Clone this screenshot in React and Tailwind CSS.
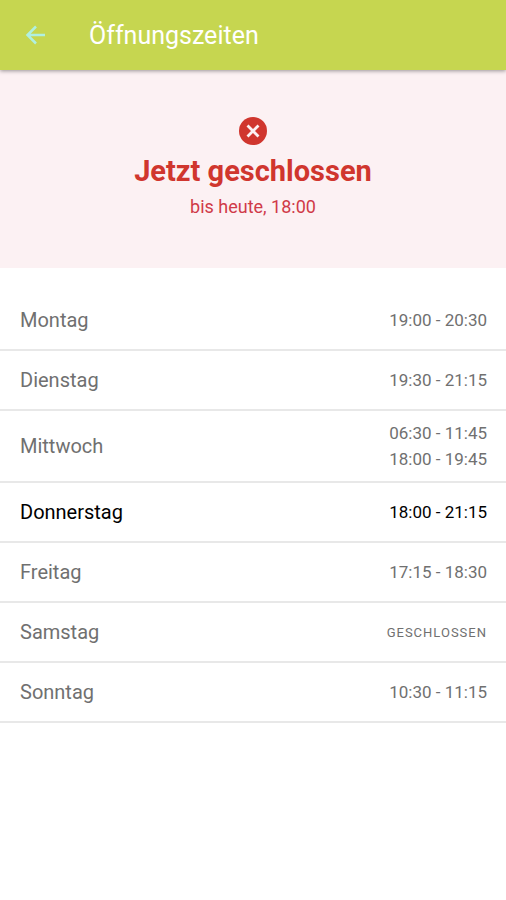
const days = [
  { day: "Montag", times: ["19:00 - 20:30"] },
  { day: "Dienstag", times: ["19:30 - 21:15"] },
  { day: "Mittwoch", times: ["06:30 - 11:45", "18:00 - 19:45"] },
  { day: "Donnerstag", times: ["18:00 - 21:15"], today: true },
  { day: "Freitag", times: ["17:15 - 18:30"] },
  { day: "Samstag", times: [] },
  { day: "Sonntag", times: ["10:30 - 11:15"] },
];

function DayRow({ day, times, today }) {
  return (
    <tr className={`border-b-2 border-[#e8e8e8] ${today ? "text-black" : "text-[#707070]"}`}>
      <th scope="row" className="py-2 pl-5 text-left text-[20px] leading-[26px] font-normal">
        {day}
      </th>
      <td className={`pr-[19px] text-right text-[17px] leading-[26px] ${times.length > 1 ? "h-[72px]" : "h-[60px]"}`}>
        {times.length === 0 ? (
          <span className="text-[13px] tracking-[1px] uppercase">Geschlossen</span>
        ) : (
          times.map((time) => <div key={time}>{time}</div>)
        )}
      </td>
    </tr>
  );
}

export default function App() {
  return (
    <div className="min-h-screen bg-white font-[Roboto,sans-serif]">
      <header className="relative flex h-[70px] items-center bg-[#c6d650] pl-[19px] shadow-[0_1px_4px_rgba(0,0,0,0.4)]">
        <button type="button" aria-label="Zurück" className="flex size-8 items-center justify-center text-[#b0f0e0]">
          <svg viewBox="0 0 30 30" className="size-[30px]" fill="none" stroke="currentColor" strokeWidth="2.5" aria-hidden="true">
            <path d="M25 15H7.5M16 6.5L7.5 15l8.5 8.5" />
          </svg>
        </button>
        <h1 className="ml-[38px] pt-[2px] text-[25px] leading-8 text-white">Öffnungszeiten</h1>
      </header>
      <main>
        <section className="flex flex-col items-center bg-[#fcf1f3] pt-[47px] pb-[47px] text-[#d0362e]">
          <svg viewBox="0 0 28 28" className="size-7" aria-hidden="true">
            <circle cx="14" cy="14" r="14" fill="currentColor" />
            <path d="M8.5 8.5l11 11M19.5 8.5l-11 11" stroke="#fcf1f3" strokeWidth="2.8" />
          </svg>
          <h2 className="mt-2 text-[29px] leading-9 font-bold">Jetzt geschlossen</h2>
          <p className="mt-1 text-[18px] leading-7 text-[#d03a48]">bis heute, 18:00</p>
        </section>
        <table className="mt-[22px] w-full border-collapse">
          <tbody>
            {days.map((entry) => (
              <DayRow key={entry.day} {...entry} />
            ))}
          </tbody>
        </table>
      </main>
    </div>
  );
}
